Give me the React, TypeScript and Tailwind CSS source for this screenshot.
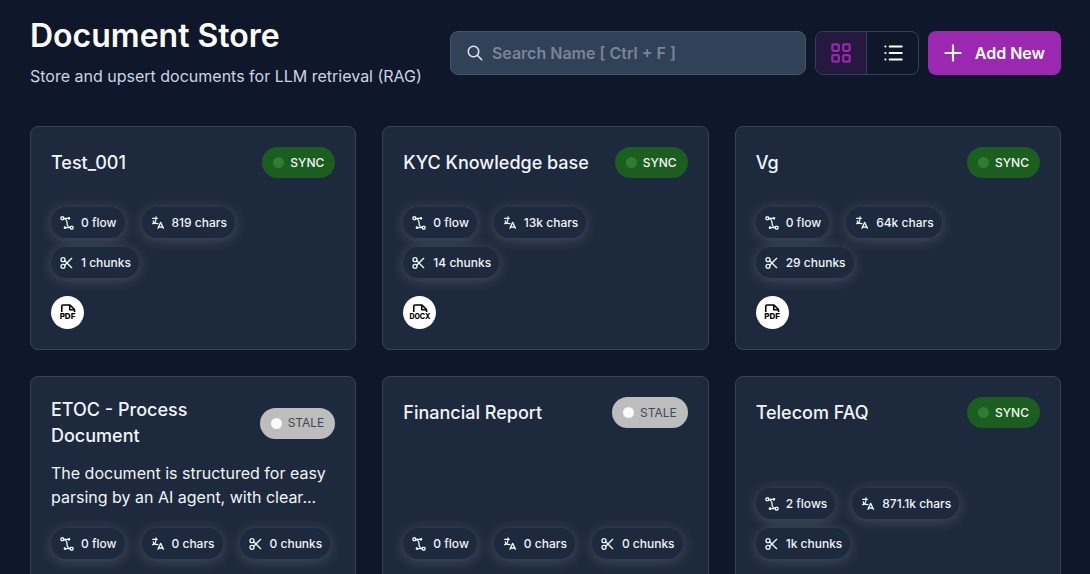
import { useState } from "react";
import { TbLayoutGrid, TbList, TbPlus, TbScissors, TbSearch, TbVectorBezier2 } from "react-icons/tb";

type Status = "SYNC" | "STALE";

interface Store {
  name: string;
  description?: string;
  status: Status;
  flows: string;
  chars: string;
  chunks: string;
  loader: "PDF" | "DOCX";
}

const stores: Store[] = [
  { name: "Test_001", status: "SYNC", flows: "0 flow", chars: "819 chars", chunks: "1 chunks", loader: "PDF" },
  { name: "KYC Knowledge base", status: "SYNC", flows: "0 flow", chars: "13k chars", chunks: "14 chunks", loader: "DOCX" },
  { name: "Vg", status: "SYNC", flows: "0 flow", chars: "64k chars", chunks: "29 chunks", loader: "PDF" },
  {
    name: "ETOC - Process Document",
    description: "The document is structured for easy parsing by an AI agent, with clear...",
    status: "STALE",
    flows: "0 flow",
    chars: "0 chars",
    chunks: "0 chunks",
    loader: "PDF",
  },
  { name: "Financial Report", status: "STALE", flows: "0 flow", chars: "0 chars", chunks: "0 chunks", loader: "PDF" },
  { name: "Telecom FAQ", status: "SYNC", flows: "2 flows", chars: "871.1k chars", chunks: "1k chunks", loader: "PDF" },
];

function LanguageIcon() {
  return (
    <svg
      className="size-4 shrink-0"
      viewBox="0 0 24 24"
      fill="none"
      stroke="currentColor"
      strokeWidth="2"
      strokeLinecap="round"
      strokeLinejoin="round"
      aria-hidden="true"
    >
      <path d="M4 5h7" />
      <path d="M9 3v2c0 4.418 -2.239 8 -5 8" />
      <path d="M5 9c0 2.144 2.952 3.908 6.7 4" />
      <path d="M12 20l4 -9l4 9" />
      <path d="M19.1 18h-6.2" />
    </svg>
  );
}

function LoaderIcon({ type }: { type: Store["loader"] }) {
  return (
    <div className="flex size-[33px] flex-col items-center justify-center rounded-full bg-white text-black">
      <svg
        className="h-2 w-4"
        viewBox="0 0 16 8"
        fill="none"
        stroke="currentColor"
        strokeWidth="1.6"
        strokeLinejoin="round"
        aria-hidden="true"
      >
        <path d="M1.75 8V2.5q0-1.5 1.5-1.5H10l4.5 4.5V8" />
        <path d="M9.75 1v4.75h4.75" />
      </svg>
      <span className={`leading-[9px] font-extrabold ${type === "PDF" ? "text-[8px]" : "text-[7px]"}`}>{type}</span>
    </div>
  );
}

function StatusPill({ status }: { status: Status }) {
  const stale = status === "STALE";
  return (
    <div
      className={`flex h-[31px] shrink-0 items-center gap-[6px] rounded-full px-[11px] text-xs ${
        stale ? "bg-[#bdbdbd] text-[#424957]" : "bg-[#1b5e20] font-medium text-[#f1f8f2]"
      }`}
    >
      <span className={`size-[11px] rounded-full ${stale ? "bg-[#fafafa]" : "bg-[#2e7d32]"}`} />
      {status}
    </div>
  );
}

function Chip({ icon, label }: { icon: React.ReactNode; label: string }) {
  return (
    <div className="flex h-[31px] items-center gap-[6px] rounded-full bg-slate-800 px-2 text-xs font-medium whitespace-nowrap text-slate-100 shadow-[0_2px_14px_rgba(255,255,255,0.18)]">
      {icon}
      {label}
    </div>
  );
}

function StoreCard({ store }: { store: Store }) {
  return (
    <article className="flex min-h-[224px] flex-col rounded-lg border border-[#384456] bg-slate-800 p-5">
      <div className="flex items-center justify-between gap-4">
        <h2 className="text-lg leading-[26px] font-medium text-slate-100">{store.name}</h2>
        <StatusPill status={store.status} />
      </div>
      {store.description && (
        <p className="mt-3 mb-[19px] line-clamp-2 text-base leading-6 text-slate-100">{store.description}</p>
      )}
      <div className="mt-auto flex flex-wrap gap-x-[17px] gap-y-[9px]">
        <Chip icon={<TbVectorBezier2 className="size-4" />} label={store.flows} />
        <Chip icon={<LanguageIcon />} label={store.chars} />
        <Chip icon={<TbScissors className="size-4" />} label={store.chunks} />
      </div>
      <div className="mt-[18px]">
        <LoaderIcon type={store.loader} />
      </div>
    </article>
  );
}

export default function App() {
  const [view, setView] = useState("card");
  const [search, setSearch] = useState("");

  const visible = stores.filter((s) => s.name.toLowerCase().includes(search.toLowerCase()));

  return (
    <main className="h-screen overflow-hidden bg-slate-900 pr-[29px] pl-[30px] font-['Inter',sans-serif]">
      {/* Header */}
      <header className="flex items-center gap-7 pt-[17px]">
        <div className="shrink-0">
          <h1 className="text-[32px] leading-[38px] font-semibold text-white">Document Store</h1>
          <p className="mt-2 text-base leading-[26px] text-slate-300">
            Store and upsert documents for LLM retrieval (RAG)
          </p>
        </div>

        <div className="flex flex-1 items-center gap-[9px]">
          <label className="flex h-11 flex-1 items-center gap-2 rounded-lg border border-slate-600 bg-slate-700 px-[15px]">
            <TbSearch className="size-[18px] shrink-0 text-slate-200" />
            <input
              type="text"
              aria-label="Search Name"
              placeholder="Search Name [ Ctrl + F ]"
              value={search}
              onChange={(e) => setSearch(e.target.value)}
              className="w-full min-w-0 bg-transparent text-base font-semibold text-white outline-none placeholder:text-[#7b8496]"
            />
          </label>

          <div className="flex h-11 w-[104px] overflow-hidden rounded-lg border border-slate-700">
            <button
              type="button"
              aria-label="Card view"
              aria-pressed={view === "card"}
              onClick={() => setView("card")}
              className={`flex flex-1 items-center justify-center border-r border-slate-700 ${
                view === "card" ? "bg-[#26193f] text-[#9c27b0]" : "text-white"
              }`}
            >
              <TbLayoutGrid className="size-[26px]" />
            </button>
            <button
              type="button"
              aria-label="List view"
              aria-pressed={view === "list"}
              onClick={() => setView("list")}
              className={`flex flex-1 items-center justify-center ${
                view === "list" ? "bg-[#26193f] text-[#9c27b0]" : "text-white"
              }`}
            >
              <TbList className="size-[26px]" />
            </button>
          </div>

          <button
            type="button"
            className="flex h-11 items-center gap-[9px] rounded-lg bg-[#9c27b0] pr-4 pl-3 text-base font-semibold whitespace-nowrap text-white"
          >
            <TbPlus className="size-[26px]" />
            Add New
          </button>
        </div>
      </header>

      {/* Stores */}
      <section className="mt-[37px] grid grid-cols-3 gap-[26px]">
        {visible.map((store) => (
          <StoreCard key={store.name} store={store} />
        ))}
      </section>
    </main>
  );
}
